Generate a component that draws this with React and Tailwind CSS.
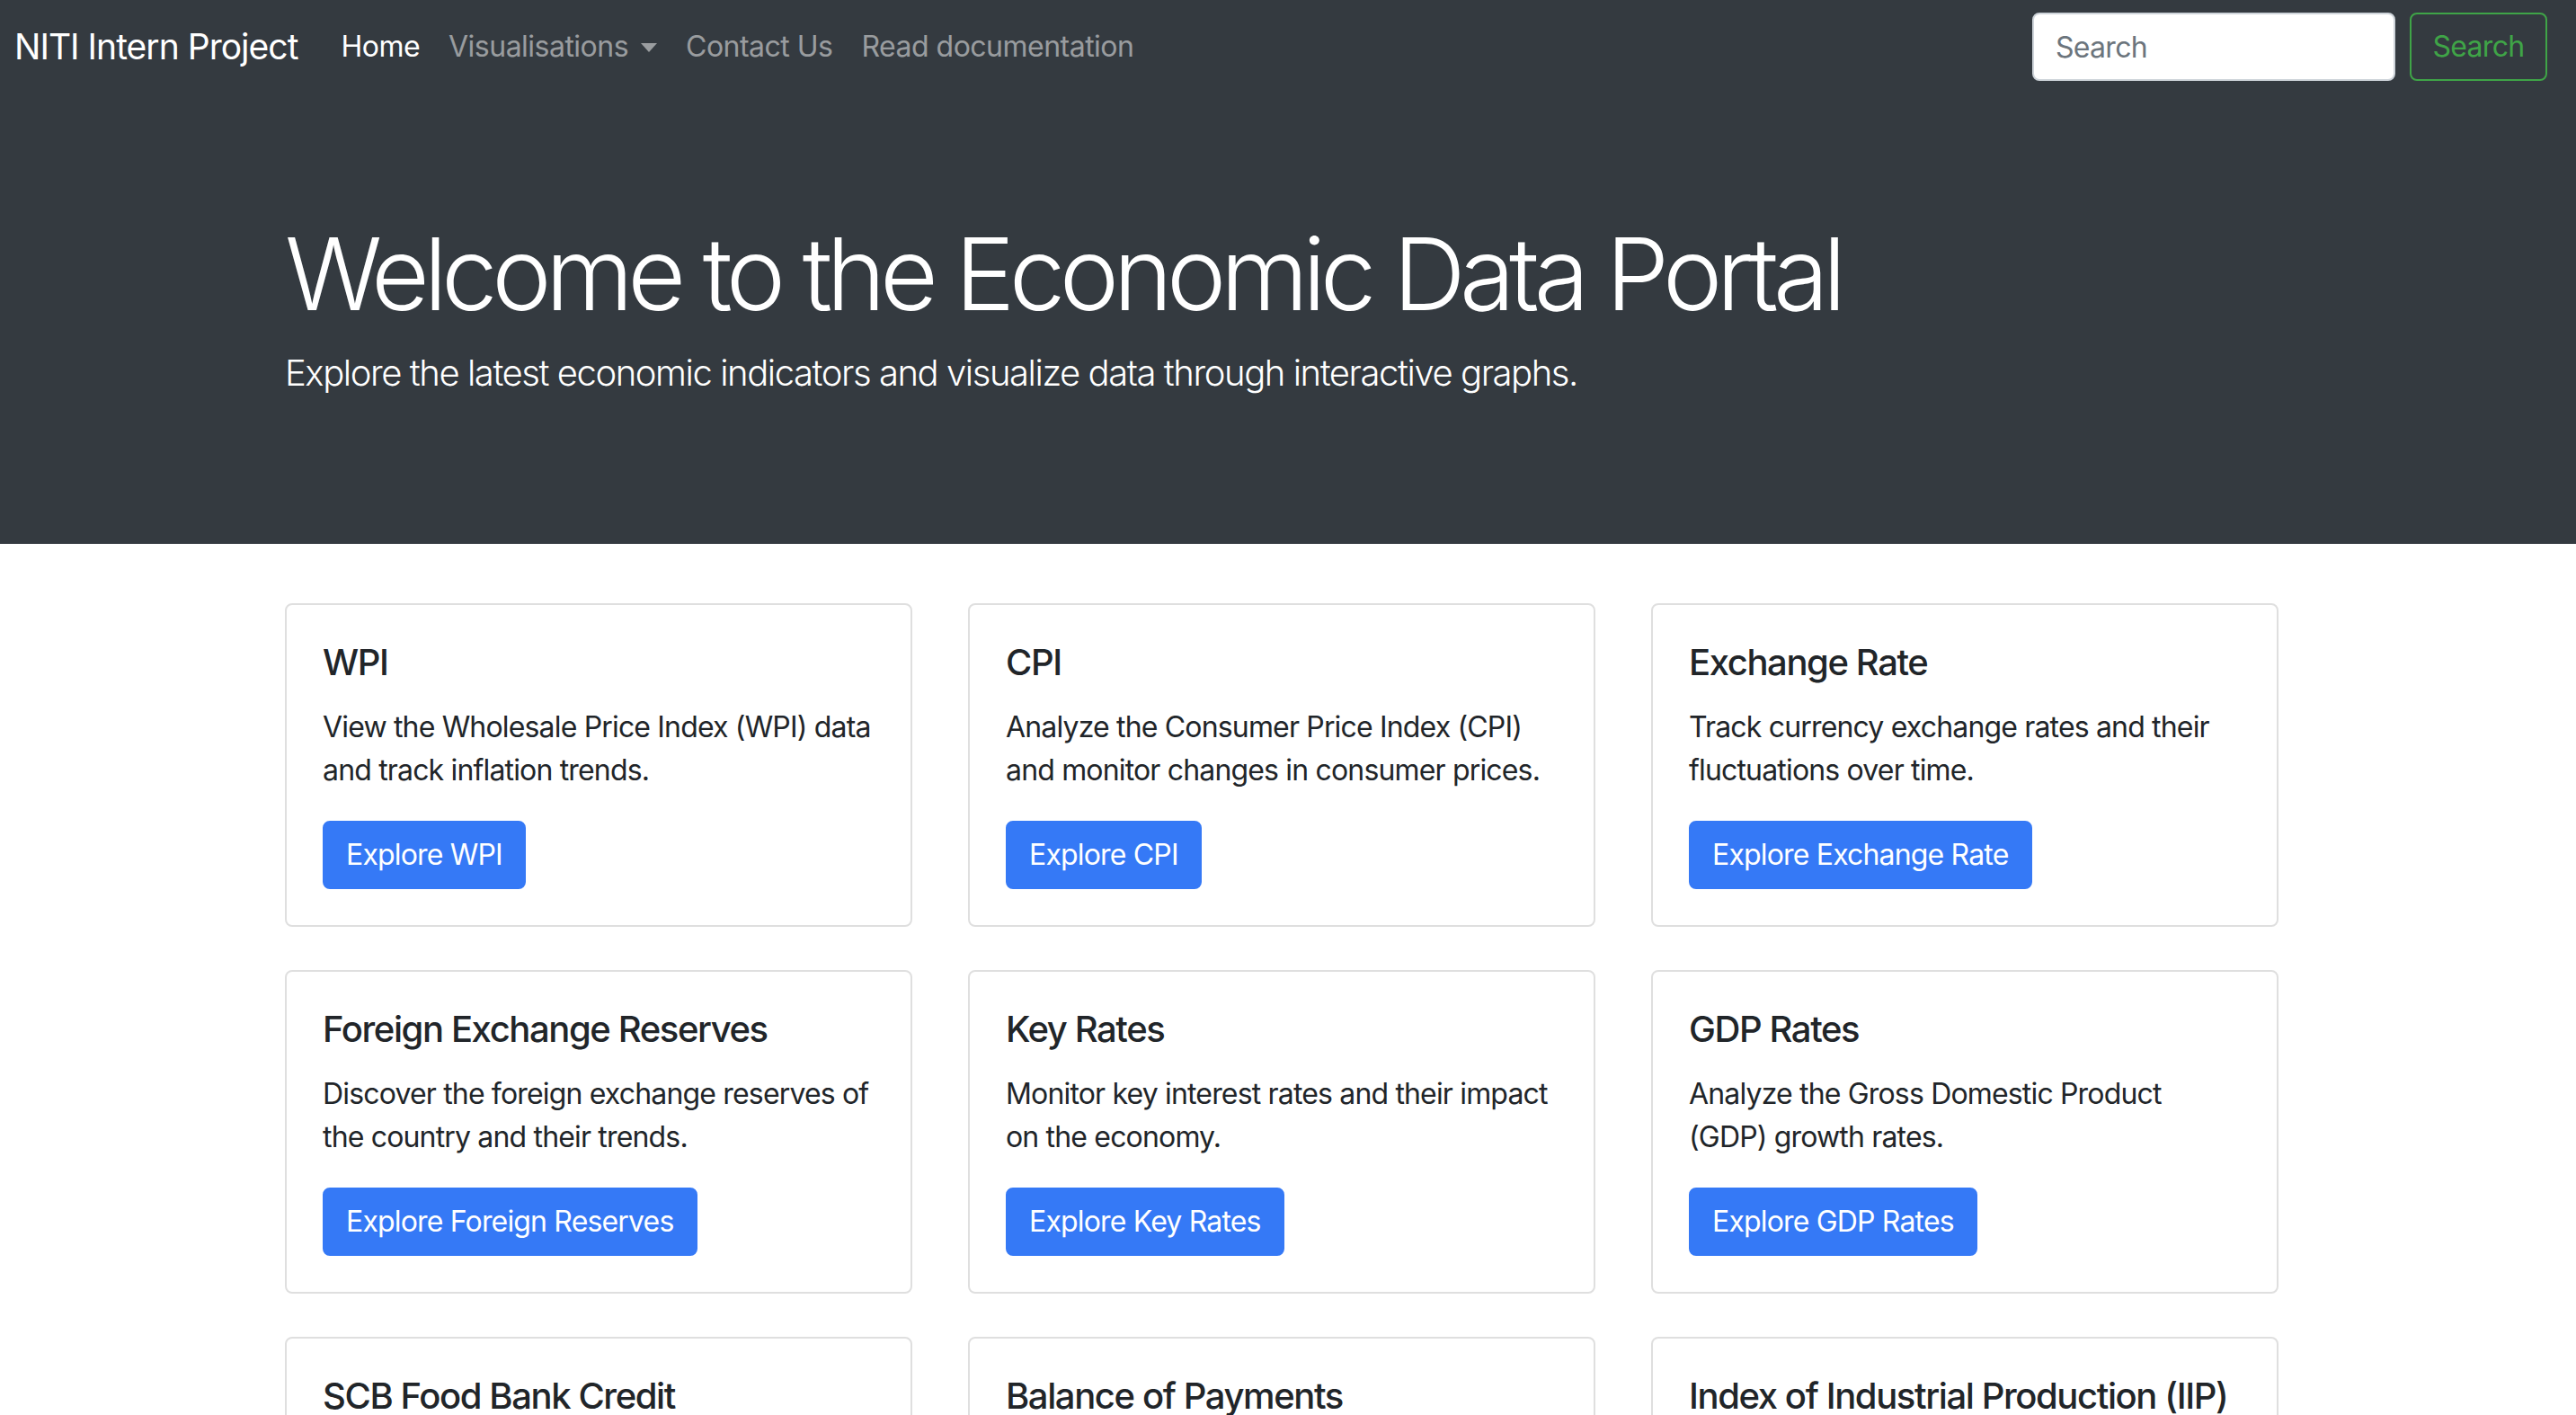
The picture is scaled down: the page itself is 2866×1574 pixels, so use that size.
import React from 'react';

const CARDS = [
  { title: 'WPI', text: 'View the Wholesale Price Index (WPI) data and track inflation trends.', cta: 'Explore WPI' },
  { title: 'CPI', text: 'Analyze the Consumer Price Index (CPI) and monitor changes in consumer prices.', cta: 'Explore CPI' },
  { title: 'Exchange Rate', text: 'Track currency exchange rates and their fluctuations over time.', cta: 'Explore Exchange Rate' },
  { title: 'Foreign Exchange Reserves', text: 'Discover the foreign exchange reserves of the country and their trends.', cta: 'Explore Foreign Reserves' },
  { title: 'Key Rates', text: 'Monitor key interest rates and their impact on the economy.', cta: 'Explore Key Rates' },
  { title: 'GDP Rates', text: 'Analyze the Gross Domestic Product (GDP) growth rates.', cta: 'Explore GDP Rates' },
  { title: 'SCB Food Bank Credit', text: 'Review food credit extended by scheduled commercial banks.', cta: 'Explore SCB Food Credit' },
  { title: 'Balance of Payments', text: 'Study the balance of payments and external sector accounts.', cta: 'Explore Balance of Payments' },
  { title: 'Index of Industrial Production (IIP)', text: 'Follow industrial output across sectors over time.', cta: 'Explore IIP' },
];

const NAV = ['Visualisations', 'Contact Us', 'Read documentation'];

function Navbar() {
  return (
    <nav className="flex h-[104px] items-center bg-[#343a40] pl-[16px] pr-[32px]">
      <a className="mr-[32px] text-[39px] leading-[60px] tracking-[-0.025em] text-white">NITI Intern Project</a>
      <ul className="flex items-center text-[32px] leading-[48px] tracking-[-0.016em]">
        <li className="px-[16px] text-white">Home</li>
        {NAV.map((label, i) => (
          <li key={label} className="flex items-center px-[16px] text-white/50">
            {label}
            {i === 0 && (
              <span className="ml-[14px] mt-[2px] inline-block h-0 w-0 border-x-[9px] border-t-[10px] border-x-transparent border-t-[#9a9da0]" />
            )}
          </li>
        ))}
      </ul>
      <form className="ml-auto flex items-center">
        <input
          type="search"
          placeholder="Search"
          className="h-[76px] w-[404px] rounded-[8px] border-2 border-[#ced4da] bg-white px-[24px] text-[32px] tracking-[-0.022em] text-[#495057] placeholder:text-[#6c757d] outline-none"
        />
        <button
          type="button"
          className="ml-[16px] h-[76px] w-[153px] rounded-[8px] border-2 border-[#3fa447] text-[32px] tracking-[-0.022em] text-[#3fa447]"
        >
          Search
        </button>
      </form>
    </nav>
  );
}

function Card({ title, text, cta }) {
  return (
    <div className="rounded-[8px] border-2 border-[#dfdfdf] bg-white p-[40px]">
      <h5 className="mb-[24px] text-[40px] font-medium leading-[48px] tracking-[-0.035em] text-[#212529]">{title}</h5>
      <p className="mb-[32px] text-[32px] leading-[48px] tracking-[-0.026em] text-[#212529]">{text}</p>
      <a className="inline-block rounded-[8px] border-2 border-[#3579f6] bg-[#3579f6] px-[24px] py-[12px] text-[32px] leading-[48px] tracking-[-0.026em] text-white">
        {cta}
      </a>
    </div>
  );
}

export default function App() {
  return (
    <div className="min-h-screen bg-white font-['Inter',sans-serif]">
      <Navbar />

      {/* Hero */}
      <header className="bg-[#343a40] pb-[160px] pt-[133px] text-white">
        <div className="ml-[317px] w-[2218px]">
          <h1 className="mb-[14px] text-[112px] font-light leading-[134px] tracking-[-0.058em]">
            Welcome to the Economic Data Portal
          </h1>
          <p className="text-[40px] font-light leading-[60px] tracking-[-0.036em]">
            Explore the latest economic indicators and visualize data through interactive graphs.
          </p>
        </div>
      </header>

      {/* Indicator cards */}
      <main className="ml-[317px] mt-[66px] grid w-[2218px] grid-cols-3 gap-x-[62px] gap-y-[48px] pb-[96px]">
        {CARDS.map((c) => (
          <Card key={c.title} {...c} />
        ))}
      </main>
    </div>
  );
}
